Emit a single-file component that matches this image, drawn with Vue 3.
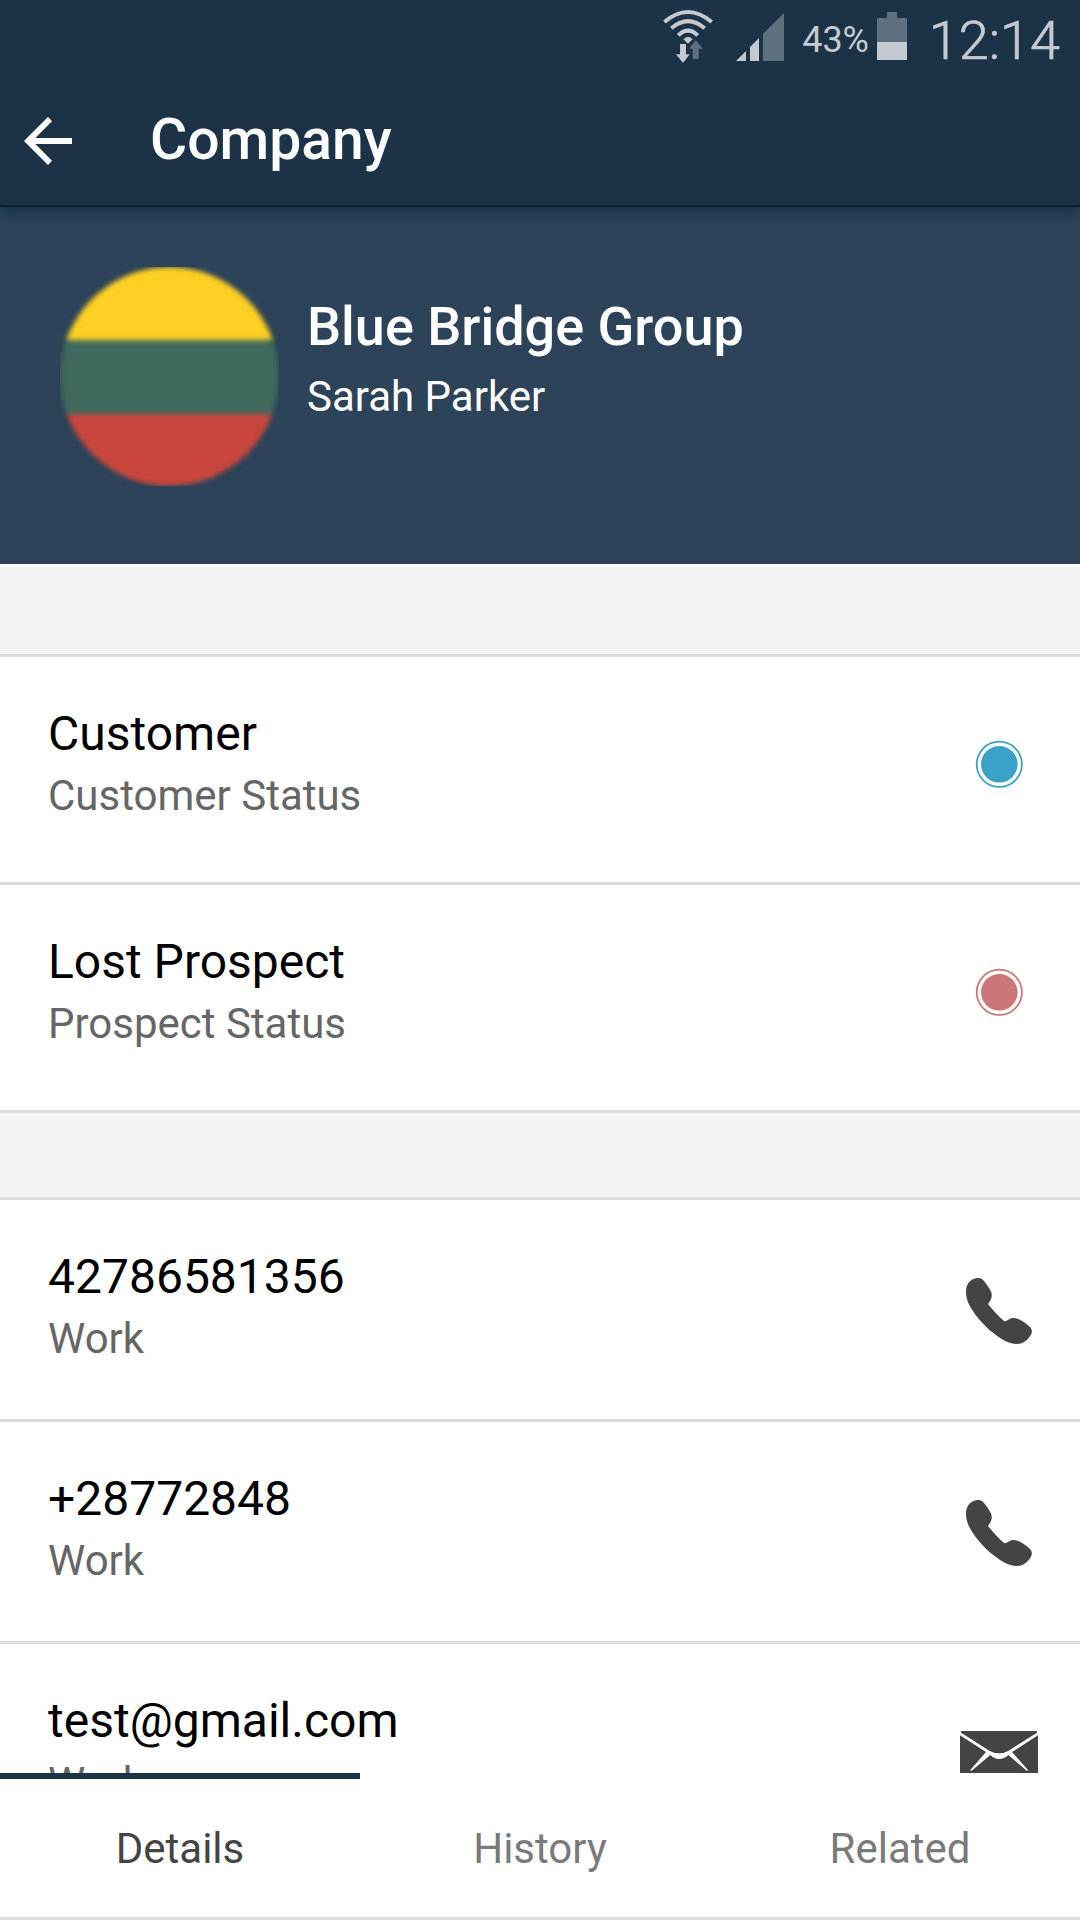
<template>
  <div class="screen">
    <header class="top">
      <div class="status-bar">
        <svg class="wifi" width="50" height="54" viewBox="0 0 150 162">
          <g fill="none" stroke="#c5c9d2" stroke-width="12">
            <path d="M4 39 Q75 -21 146 39" />
            <path d="M25 58 Q75 15 125 58" />
            <path d="M46 79 Q75 51 104 79" />
          </g>
          <path d="M75 104 L61 91 Q75 76 89 91 Z" fill="#c5c9d2" />
          <path d="M51 105 H69 V136 H80 L60 162 L39 136 H51 Z" fill="#c5c9d2" />
          <path d="M98 94 L119 119 H107 V150 H89 V119 H78 Z" fill="#5f7180" />
        </svg>
        <svg class="signal" width="48" height="48" viewBox="0 0 144 144">
          <path d="M0 144 L30 114 V144 Z" fill="#c5c9d2" />
          <path d="M42 144 V102 L69 75 V144 Z" fill="#c5c9d2" />
          <path d="M81 144 V62 L144 0 V144 Z" fill="#5f7180" />
        </svg>
        <span class="percent">43%</span>
        <svg class="battery" width="30" height="48" viewBox="0 0 30 48">
          <path d="M0 6 H10 V0 H20 V6 H30 V30 H0 Z" fill="#5f7180" />
          <rect y="30" width="30" height="18" fill="#c5c9d2" />
        </svg>
        <span class="clock">12:14</span>
      </div>
      <div class="app-bar">
        <svg class="back" width="48" height="48" viewBox="0 0 144 144">
          <path
            d="M144 63 H34 L84 13 L72 0 L0 72 L72 144 L84 131 L34 81 H144 Z"
            fill="#fff"
          />
        </svg>
        <h1 class="title">Company</h1>
      </div>
    </header>

    <section class="hero">
      <svg class="avatar" width="219" height="219" viewBox="0 0 219 219">
        <defs>
          <clipPath id="avatar-circle">
            <circle cx="109.5" cy="109.5" r="109.5" />
          </clipPath>
          <filter
            id="avatar-soft"
            x="-10%"
            y="-10%"
            width="120%"
            height="120%"
            color-interpolation-filters="sRGB"
          >
            <feGaussianBlur stdDeviation="2.8" />
          </filter>
        </defs>
        <g filter="url(#avatar-soft)">
          <g clip-path="url(#avatar-circle)">
            <rect x="-5" y="-5" width="229" height="229" fill="#40695d" />
            <rect x="-5" y="-5" width="229" height="78" fill="#fdd023" />
            <rect x="-5" y="147" width="229" height="77" fill="#c8463d" />
          </g>
        </g>
      </svg>
      <div class="hero-text">
        <h2 class="company">{{ company.name }}</h2>
        <p class="contact">{{ company.contact }}</p>
      </div>
    </section>

    <main class="content">
      <section v-for="(group, g) in groups" :key="g" class="group">
        <div :class="['spacer', { first: g === 0 }]"></div>
        <div
          v-for="(item, i) in group.items"
          :key="i"
          :class="['row', group.kind]"
        >
          <div>
            <div class="value">{{ item.value }}</div>
            <div class="label">{{ item.label }}</div>
          </div>
          <div :class="['icon', item.icon]">
            <svg
              v-if="item.icon === 'dot'"
              width="48"
              height="48"
              viewBox="0 0 48 48"
            >
              <circle
                cx="24.3"
                cy="24.3"
                r="22.6"
                fill="none"
                :stroke="item.color"
                stroke-width="1.8"
              />
              <circle cx="24.3" cy="24.3" r="18.3" :fill="item.color" />
            </svg>
            <svg
              v-else-if="item.icon === 'phone'"
              width="66"
              height="66"
              viewBox="0 0 198 198"
            >
              <path
                d="M0 41 C0 22 8 9 23 3 C36 -2 45 -1 52 7 C61 17 70 30 76 43 C79 58 76 64 66 78 C79 95 97 114 115 130 C122 130 129 122 139 120 C155 117 183 137 194 149 C200 158 198 168 190 178 C180 190 171 198 153 198 C129 198 109 186 82 165 C51 141 22 106 8 77 C3 65 0 53 0 41 Z"
                fill="#444"
              />
            </svg>
            <svg v-else width="78" height="54" viewBox="0 0 234 162">
              <rect width="234" height="162" fill="#444" />
              <path
                d="M0 0 H3 V5 L88 59 Q102 67 118 67 Q132 67 146 59 L231 5 V0 H234 V13 L156 63 L204 117 L201 120 L145 72 Q133 84 117 84 Q103 84 91 72 L34 120 L31 117 L78 63 L0 13 Z"
                fill="#fff"
              />
            </svg>
          </div>
        </div>
      </section>
    </main>

    <nav class="tabs">
      <button
        v-for="tab in tabs"
        :key="tab"
        :class="['tab', { active: tab === activeTab }]"
        @click="activeTab = tab"
      >
        {{ tab }}
      </button>
    </nav>
  </div>
</template>

<script setup>
import { ref } from "vue";

const company = { name: "Blue Bridge Group", contact: "Sarah Parker" };

const groups = [
  {
    kind: "status",
    items: [
      {
        value: "Customer",
        label: "Customer Status",
        icon: "dot",
        color: "#3aa1c9",
      },
      {
        value: "Lost Prospect",
        label: "Prospect Status",
        icon: "dot",
        color: "#cb777a",
      },
    ],
  },
  {
    kind: "reach",
    items: [
      { value: "42786581356", label: "Work", icon: "phone" },
      { value: "+28772848", label: "Work", icon: "phone" },
      { value: "test@gmail.com", label: "Work", icon: "mail" },
    ],
  },
];

const tabs = ["Details", "History", "Related"];
const activeTab = ref("Details");
</script>

<style>
body {
  margin: 0;
  overflow: hidden;
}
</style>

<style scoped>
.screen {
  display: flex;
  flex-direction: column;
  width: 1080px;
  height: 1920px;
  overflow: hidden;
  background: #fff;
  font-family: Roboto, sans-serif;
}

/* Header */
.top {
  position: relative;
  z-index: 1;
  flex-shrink: 0;
  box-sizing: border-box;
  height: 207px;
  background: #1c3246;
  border-bottom: 2px solid #0c2034;
  box-shadow: 0 4px 12px rgba(12, 40, 60, 0.85);
}

.status-bar {
  display: flex;
  justify-content: flex-end;
  align-items: flex-start;
  height: 75px;
  padding-right: 20px;
  color: #c5c9d2;
}
.wifi {
  margin-top: 9px;
}
.signal {
  margin: 13px 0 0 23px;
}
.percent {
  margin: 19px 0 0 18px;
  font-size: 36px;
  line-height: 42px;
}
.battery {
  margin: 12px 0 0 8px;
}
.clock {
  width: 153px;
  margin-top: 9px;
  font-size: 54px;
  font-weight: 300;
  line-height: 64px;
  text-align: right;
  -webkit-text-stroke: 0.7px #c5c9d2;
}

.app-bar {
  display: flex;
  align-items: center;
  height: 130px;
  padding-left: 24px;
}
.back {
  margin-top: 2px;
}
.title {
  margin: 0 0 0 78px;
  color: #fff;
  font-size: 57px;
  font-weight: 500;
  line-height: 68px;
}

/* Company summary */
.hero {
  display: flex;
  flex-shrink: 0;
  box-sizing: border-box;
  height: 357px;
  padding: 60px 60px 0;
  background: #2d4359;
  color: #fff;
}
.avatar {
  display: block;
  overflow: hidden;
}
.hero-text {
  margin: 28px 0 0 28px;
}
.company {
  margin: 0;
  font-size: 54px;
  font-weight: 500;
  line-height: 64px;
}
.contact {
  margin: 13px 0 0;
  font-size: 42px;
  line-height: 50px;
}

/* Details list */
.content {
  flex: 1;
  min-height: 0;
  overflow: hidden;
}
.spacer {
  height: 84px;
  background: #f4f4f4;
  border-bottom: 3px solid #ddd;
}
.spacer.first {
  height: 87px;
  border-top: 3px solid #fff;
}
.row {
  display: flex;
  justify-content: space-between;
  padding: 47px 42px 0 48px;
  border-bottom: 3px solid #ddd;
}
.row.status {
  height: 178px;
}
.row.reach {
  height: 172px;
}
.value {
  color: #000;
  font-size: 48px;
  line-height: 60px;
}
.label {
  margin-top: 2px;
  color: #666;
  font-size: 42px;
  line-height: 60px;
}
.icon {
  display: flex;
  justify-content: center;
  align-items: flex-start;
  width: 78px;
}
.icon.dot {
  padding-top: 36px;
}
.icon.phone {
  padding-top: 31px;
}
.icon.mail {
  padding-top: 40px;
}

/* Bottom tabs */
.tabs {
  display: grid;
  grid-template-columns: repeat(3, 1fr);
  flex-shrink: 0;
  box-sizing: border-box;
  height: 147px;
  background: #fff;
  border-bottom: 3px solid #ddd;
}
.tab {
  padding: 0;
  background: none;
  border: 0;
  border-top: 6px solid transparent;
  color: #7a7a7a;
  font-family: inherit;
  font-size: 42px;
}
.tab.active {
  border-top-color: #1c3448;
  color: #444;
}
</style>
